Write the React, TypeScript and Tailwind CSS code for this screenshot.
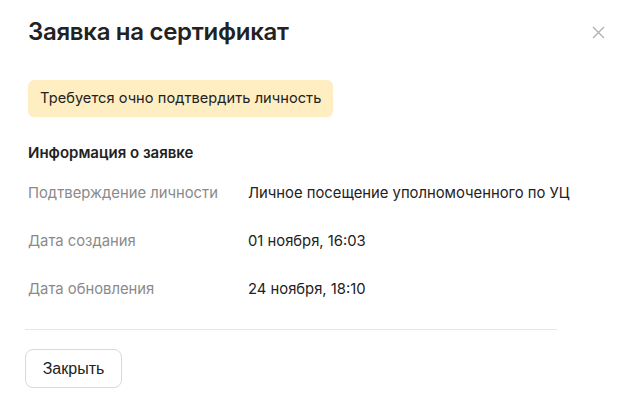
import React from "react";

export default function App() {
  const rows = [
    ["Подтверждение личности", "Личное посещение уполномоченного по УЦ"],
    ["Дата создания", "01 ноября, 16:03"],
    ["Дата обновления", "24 ноября, 18:10"],
  ];
  return (
    <div className="w-[621px] h-[404px] bg-white relative overflow-hidden" style={{ fontFamily: "Inter, 'Noto Sans', sans-serif" }}>
      <button className="absolute left-[592px] top-[26px] w-[13px] h-[13px] text-[#b0b0b0]">
        <svg width="13" height="13" viewBox="0 0 13 13" fill="none" stroke="currentColor" strokeWidth="1.3">
          <path d="M1 1L12 12M12 1L1 12" />
        </svg>
      </button>
      <div className="pl-[28px] pt-[16px]">
        <h1 className="text-[24px] leading-[32px] font-semibold text-[#222] tracking-[-0.3px]">Заявка на сертификат</h1>
        <div className="mt-[32px] inline-flex items-center h-[37px] px-[12px] rounded-[6px] bg-[#feeec2] text-[14.6px] text-[#222] tracking-[0.05px]">
          Требуется очно подтвердить личность
        </div>
        <div className="mt-[26px] text-[15px] leading-[20px] font-semibold text-[#222]">Информация о заявке</div>
        <div className="mt-[6px] flex flex-col">
          {rows.map(([l, v]) => (
            <div key={l} className="flex items-center h-[48px] text-[14.8px]">
              <div className="w-[220px] text-[#8a8a8a]">{l}</div>
              <div className="text-[#222]">{v}</div>
            </div>
          ))}
        </div>
      </div>
      <div className="ml-[25px] mt-[16px] w-[532px] h-px bg-[#e6e6e6]" />
      <div className="ml-[25px] mt-[19px]">
        <button className="w-[97px] h-[39px] rounded-[8px] border border-[#d9d9d9] text-[16px] text-[#222]" style={{ fontFamily: "'Liberation Sans', Arial, sans-serif" }}>
          Закрыть
        </button>
      </div>
    </div>
  );
}
